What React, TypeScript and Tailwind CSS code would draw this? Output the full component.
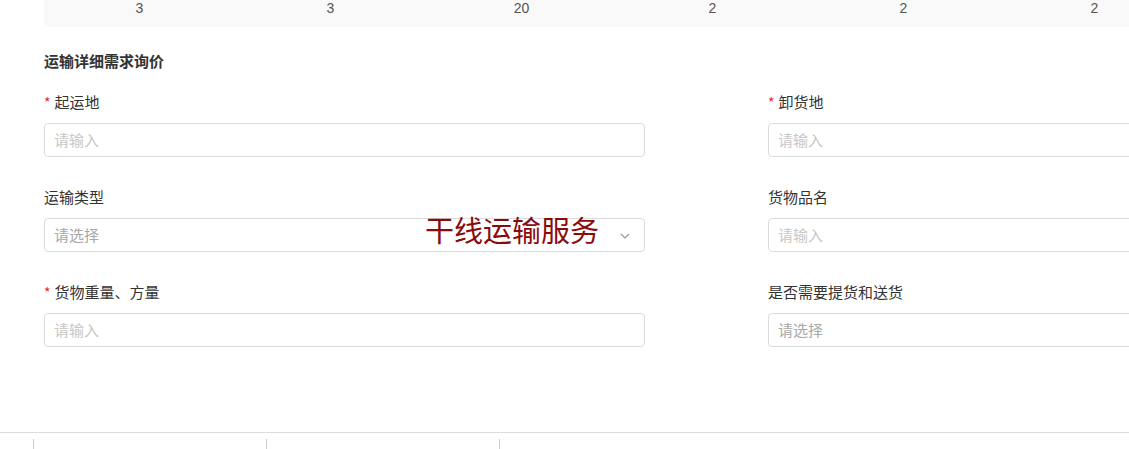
import React from "react"

const font = "font-['Microsoft_YaHei','Noto_Sans_CJK_SC',sans-serif]"

const nums = ["3", "3", "20", "2", "2", "2"]

interface FieldProps {
    label: string
    required?: boolean
    placeholder: string
    select?: boolean
}

const Field: React.FC<FieldProps> = ({ label, required, placeholder, select }) => {
    return (
        <div className="w-[600px]">
            <div className="flex items-center h-[22px] mb-[10px] text-[15px] text-[#333]">
                {required && <span className="text-[#f5222d] mr-[4px] text-[14px] leading-none">*</span>}
                <span>{label}</span>
            </div>
            <div className="relative flex items-center h-[34px] w-[601px] border border-[#dcdcdc] rounded-[4px] bg-white pl-[9px] pr-[14px]">
                {select ? (
                    <>
                        <span className="text-[15px] text-[#a8a8a8] flex-1">{placeholder}</span>
                        <svg width="10" height="6" viewBox="0 0 10 6" fill="none" className="mt-[1px]">
                            <path d="M1 1l4 4 4-4" stroke="#999" strokeWidth="1.2" />
                        </svg>
                    </>
                ) : (
                    <input
                        className="w-full outline-none text-[15px] text-[#333] placeholder:text-[#c8c8c8] bg-transparent"
                        placeholder={placeholder}
                    />
                )}
            </div>
        </div>
    )
}

const App = () => {
    return (
        <div className={`relative w-[1129px] h-[449px] overflow-hidden bg-white ${font}`}>
            <div className="w-[1400px]">
                <div className="ml-[44px] h-[27px] bg-[#f9f9f9] flex">
                    {nums.map((n, i) => (
                        <div key={i} className="w-[191px] text-center text-[14px] leading-[17px] text-[#555] font-['Liberation_Sans',sans-serif]">
                            {n}
                        </div>
                    ))}
                </div>

                <div className="pl-[44px] pt-[24px]">
                    <h2 className="text-[15px] font-bold text-[#333] leading-[20px]">运输详细需求询价</h2>

                    <div className="grid grid-cols-[600px_600px] gap-x-[124px] gap-y-[29px] mt-[20px]">
                        <Field label="起运地" required placeholder="请输入" />
                        <Field label="卸货地" required placeholder="请输入" />
                        <Field label="运输类型" placeholder="请选择" select />
                        <Field label="货物品名" placeholder="请输入" />
                        <Field label="货物重量、方量" required placeholder="请输入" />
                        <Field label="是否需要提货和送货" placeholder="请选择" select />
                    </div>
                </div>
            </div>

            <div className="absolute left-[425px] top-[211px] text-[29px] leading-[36px] text-[#8b0a0a] pointer-events-none">
                干线运输服务
            </div>

            <div className="absolute left-0 right-0 top-[432px] border-t border-[#dddddd] flex pt-[6px]">
                <div className="ml-[33px] w-[233px] h-[11px] border-l border-[#cccccc]" />
                <div className="w-[233px] h-[11px] border-l border-[#cccccc]" />
                <div className="w-[233px] h-[11px] border-l border-[#cccccc]" />
            </div>
        </div>
    )
}

export default App
